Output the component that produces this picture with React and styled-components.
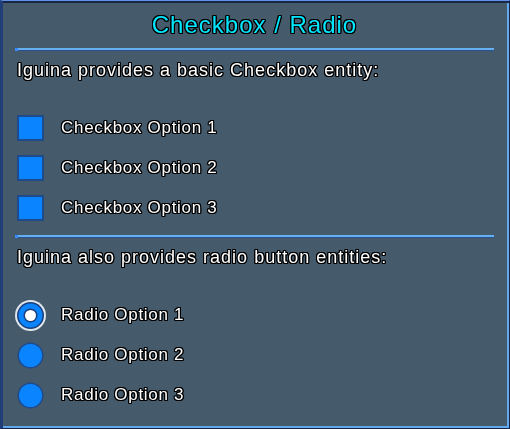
import styled, { createGlobalStyle, css } from "styled-components";

const GlobalStyle = createGlobalStyle`
  html, body {
    margin: 0;
    padding: 0;
    background: #455a6b;
  }
`;

// pixel outline round the glyphs
const outline = css`
  filter: drop-shadow(1px 0 0 #000) drop-shadow(-1px 0 0 #000)
    drop-shadow(0 1px 0 #000) drop-shadow(0 -1px 0 #000);
`;

const Panel = styled.div`
  box-sizing: border-box;
  width: 510px;
  height: 429px;
  background: #455a6b;
  border-top: 1px solid #6094e6;
  border-left: 3px solid #213e78;
  border-right: 1px solid #1b2548;
  border-bottom: 1px solid #1b2548;
  box-shadow: inset 0 2px 0 #1b2548, inset -2px 0 0 #62a8ec,
    inset 0 -2px 0 #62a8ec;
  padding: 2px 15px 0 12px;
  font-family: "Liberation Sans", Arial, sans-serif;
  color: #ffffff;
`;

const Title = styled.h1`
  margin: 0 0 2px;
  font-size: 24px;
  font-weight: normal;
  letter-spacing: 1px;
  line-height: 43px;
  text-align: center;
  color: #00e6ff;
  ${outline}
`;

const Divider = styled.div`
  height: 3px;
  margin-top: ${(p) => p.$top || 0}px;
  background: linear-gradient(#64b0f0 0 2px, #2a4f90 2px 3px);
  border-left: 3px solid #3a8cff;
`;

const Paragraph = styled.p`
  margin: 7px 0 0;
  padding-left: 2px;
  font-size: 18px;
  letter-spacing: 1px;
  line-height: 24px;
  ${outline}
`;

const List = styled.div`
  display: flex;
  flex-direction: column;
  margin-top: 26px;
`;

const Row = styled.label`
  display: flex;
  align-items: center;
  gap: 17px;
  height: 40px;
  padding-left: 2px;
`;

const Label = styled.span`
  font-size: 17px;
  letter-spacing: 0.7px;
  ${outline}
`;

const Box = styled.span`
  box-sizing: border-box;
  width: 27px;
  height: 26px;
  background: #0a84ff;
  border: 2px solid #1f4b8c;
  flex: none;
`;

const RadioSlot = styled.span`
  display: flex;
  align-items: center;
  justify-content: center;
  width: 27px;
  height: 27px;
  flex: none;

  svg {
    overflow: visible;
  }
`;

const RadioIcon = ({ checked }) => (
  <RadioSlot>
    {checked ? (
      <svg width="31" height="31" viewBox="0 0 31 31" style={{ margin: "-2px" }}>
        <circle cx="15.5" cy="15.5" r="15.5" fill="#dfe6ec" />
        <circle cx="15.5" cy="15.5" r="13.5" fill="#1b3f7a" />
        <circle cx="15.5" cy="15.5" r="12" fill="#0a84ff" />
        <circle cx="15.5" cy="15.5" r="7" fill="#1b3f7a" />
        <circle cx="15.5" cy="15.5" r="5.5" fill="#ffffff" />
      </svg>
    ) : (
      <svg width="27" height="27" viewBox="0 0 27 27">
        <circle cx="13.5" cy="13.5" r="13" fill="#1f4b8c" />
        <circle cx="13.5" cy="13.5" r="11.5" fill="#0a84ff" />
      </svg>
    )}
  </RadioSlot>
);

const checkboxes = ["Checkbox Option 1", "Checkbox Option 2", "Checkbox Option 3"];
const radios = ["Radio Option 1", "Radio Option 2", "Radio Option 3"];

export default function App() {
  return (
    <>
      <GlobalStyle />
      <Panel>
        <Title>Checkbox / Radio</Title>
        <Divider />
        <Paragraph>Iguina provides a basic Checkbox entity:</Paragraph>
        <List>
          {checkboxes.map((c) => (
            <Row key={c}>
              <Box />
              <Label>{c}</Label>
            </Row>
          ))}
        </List>
        <Divider $top={7} />
        <Paragraph>Iguina also provides radio button entities:</Paragraph>
        <List>
          {radios.map((r, i) => (
            <Row key={r}>
              <RadioIcon checked={i === 0} />
              <Label>{r}</Label>
            </Row>
          ))}
        </List>
      </Panel>
    </>
  );
}
